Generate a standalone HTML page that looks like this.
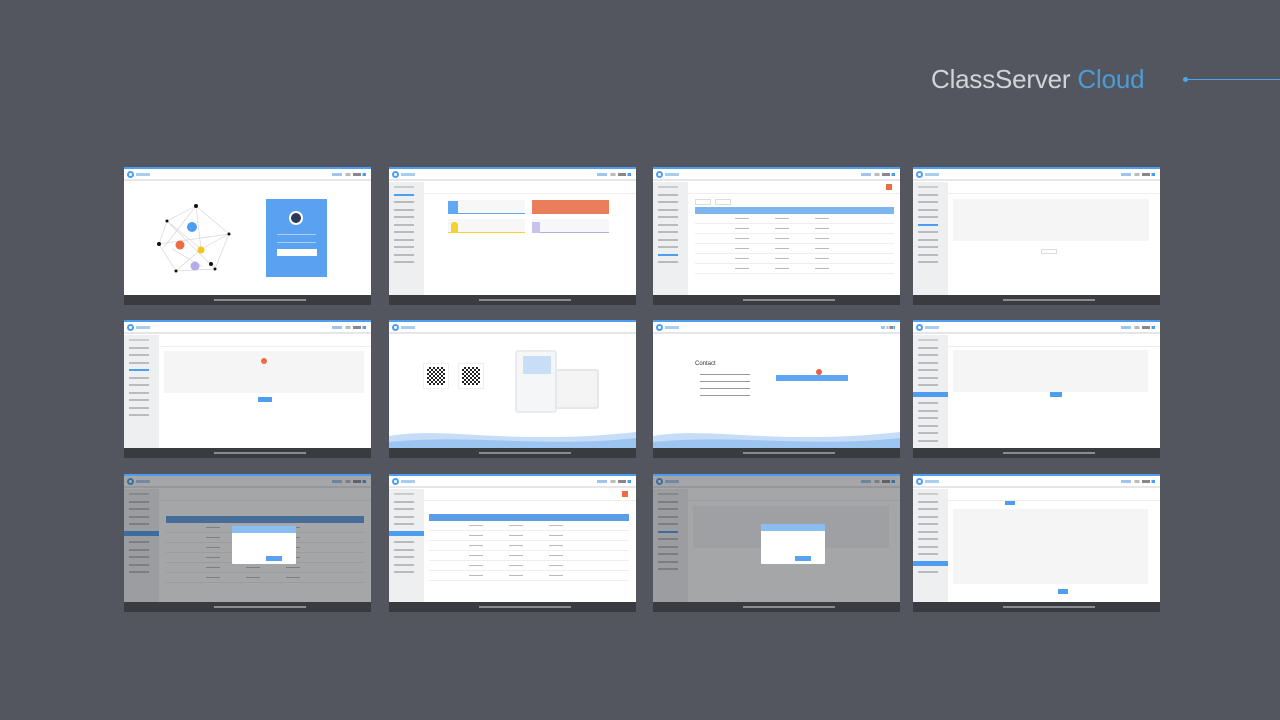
<!DOCTYPE html>
<html><head><meta charset="utf-8">
<style>
*{margin:0;padding:0;box-sizing:border-box}
body{width:1280px;height:720px;background:#53565e;position:relative;overflow:hidden;font-family:"Liberation Sans",sans-serif}
.title{position:absolute;left:931px;top:64px;font-size:26px;color:#d2d4d8;letter-spacing:-0.2px;font-weight:300}
.title span{color:#4c9bd6}
.line{position:absolute;left:1186px;top:79px;width:94px;height:1px;background:#4aa6e8}
.dot{position:absolute;left:1183px;top:77px;width:5px;height:5px;border-radius:50%;background:#4aa6e8}
.t{position:absolute;width:247px;height:138px;background:#fff;overflow:hidden;border-top:2px solid #4d9ef0}
.hd{position:absolute;left:0;top:0;right:0;height:12px;background:#fff;border-bottom:2px solid #e4e6ea}
.lg{position:absolute;left:3px;top:2px;width:7px;height:7px;border-radius:50%;border:2px solid #4d9ef0}
.lt{position:absolute;left:12px;top:4px;width:14px;height:3px;background:#a8cdf3}
.hr{position:absolute;right:5px;top:4px;width:34px;height:3px;background:linear-gradient(90deg,#9cc6f0 0 30%,transparent 30% 40%,#bbb 40% 55%,transparent 55% 62%,#888 62% 85%,transparent 85% 90%,#4d9ef0 90%)}
.ft{position:absolute;left:0;right:0;bottom:0;height:10px;background:#393b40}
.ft:after{content:"";position:absolute;left:90px;top:4px;width:92px;height:2px;background:#8a8c90}
.sb{position:absolute;left:0;top:13px;width:35px;bottom:10px;background:#eeeff1}
.sb i{display:block;height:2px;width:20px;background:#b8bbc0;margin:5.5px 0 0 5px}
.sb i.a{background:#4d9ef0}
.bc{position:absolute;left:35px;top:13px;right:0;height:12px;border-bottom:1px solid #eee}
.r{position:absolute}
.tbl{position:absolute;background:#fff}
.th{height:7px;background:#7db5ee}
.tr{height:10px;border-bottom:1px solid #eee;position:relative}
.tr:after{content:"";position:absolute;left:20%;top:4px;width:60%;height:1px;background:repeating-linear-gradient(90deg,#bbb 0 14px,transparent 14px 40px)}
.dim{position:absolute;left:0;top:0;right:0;bottom:0;background:rgba(40,42,48,.42)}
.dlg{position:absolute;background:#fff;border-radius:1px}
.dlg .h{height:7px;background:#8cbdf0}
.q{position:absolute;background:repeating-conic-gradient(#222 0 25%,#fff 0 50%) 0 0/4px 4px;border:3px solid #fff;outline:1px solid #eee}
</style></head><body>
<div class="title">ClassServer <span>Cloud</span></div>
<div class="dot"></div><div class="line"></div>

<!-- Row 1 -->
<div class="t" style="left:124px;top:167px">
 <div class="hd"><div class="lg"></div><div class="lt"></div><div class="hr"></div></div>
 <svg class="r" style="left:25px;top:25px" width="100" height="85" viewBox="0 0 100 85"><g stroke="#d7d7d7" stroke-width=".7" fill="none"><path d="M47 12L18 27L10 50L27 77L66 75L80 40L47 12M47 12L52 55L27 77M18 27L66 75M10 50L80 40M23 55L54 73M47 12L15 53M52 55L80 40M18 27L52 55"/></g><g fill="#111"><circle cx="47" cy="12" r="2"/><circle cx="18" cy="27" r="1.5"/><circle cx="10" cy="50" r="2"/><circle cx="27" cy="77" r="1.5"/><circle cx="66" cy="75" r="1.5"/><circle cx="80" cy="40" r="1.5"/><circle cx="62" cy="70" r="2"/><circle cx="52" cy="55" r="1"/></g><circle cx="43" cy="33" r="5" fill="#4d9ef0"/><circle cx="31" cy="51" r="4.5" fill="#ee6c43"/><circle cx="52" cy="56" r="3.5" fill="#f5c518"/><circle cx="46" cy="72" r="4.5" fill="#b3aee5"/></svg>
 <div class="r" style="left:142px;top:30px;width:61px;height:78px;background:#5aa2f1"></div>
 <div class="r" style="left:165px;top:42px;width:14px;height:14px;border-radius:50%;background:#2b3a5a;border:2px solid #fff"></div>
 <div class="r" style="left:153px;top:65px;width:39px;height:1px;background:#a9d0f8"></div>
 <div class="r" style="left:153px;top:73px;width:39px;height:1px;background:#a9d0f8"></div>
 <div class="r" style="left:153px;top:80px;width:40px;height:7px;background:#fff"></div>
 <div class="ft"></div>
</div>

<div class="t" style="left:389px;top:167px">
 <div class="hd"><div class="lg"></div><div class="lt"></div><div class="hr"></div></div>
 <div class="sb"><i style="background:#ccc;margin-top:4px"></i><i class="a"></i><i></i><i></i><i></i><i></i><i></i><i></i><i></i><i></i><i></i></div>
 <div class="bc"></div>
 <div class="r" style="left:59px;top:31px;width:77px;height:14px;background:#f7f7f7;border-bottom:1px solid #62a7f2"></div>
 <div class="r" style="left:59px;top:32px;width:10px;height:12px;background:#62a7f2"></div>
 <div class="r" style="left:143px;top:31px;width:77px;height:14px;background:#ea7e5b"></div>
 <div class="r" style="left:59px;top:50px;width:77px;height:14px;background:#f7f7f7;border-bottom:1px solid #f5d232"></div>
 <div class="r" style="left:62px;top:53px;width:7px;height:10px;background:#f5d232;border-radius:3px 3px 0 0"></div>
 <div class="r" style="left:143px;top:50px;width:77px;height:14px;background:#f7f7f7;border-bottom:1px solid #b3aee5"></div>
 <div class="r" style="left:143px;top:53px;width:8px;height:11px;background:#c7c3ee"></div>
 <div class="ft"></div>
</div>

<div class="t" style="left:653px;top:167px">
 <div class="hd"><div class="lg"></div><div class="lt"></div><div class="hr"></div></div>
 <div class="sb"><i style="background:#ccc;margin-top:4px"></i><i></i><i></i><i></i><i></i><i></i><i></i><i></i><i></i><i class="a"></i><i></i></div>
 <div class="bc"></div>
 <div class="r" style="left:233px;top:15px;width:6px;height:6px;background:#ee6c43"></div>
 <div class="r" style="left:42px;top:30px;width:16px;height:6px;border:1px solid #ddd"></div>
 <div class="r" style="left:62px;top:30px;width:16px;height:6px;border:1px solid #ddd"></div>
 <div class="tbl" style="left:42px;top:38px;width:199px"><div class="th"></div><div class="tr"></div><div class="tr"></div><div class="tr"></div><div class="tr"></div><div class="tr"></div><div class="tr"></div></div>
 <div class="ft"></div>
</div>

<div class="t" style="left:913px;top:167px">
 <div class="hd"><div class="lg"></div><div class="lt"></div><div class="hr"></div></div>
 <div class="sb"><i style="background:#ccc;margin-top:4px"></i><i></i><i></i><i></i><i></i><i class="a"></i><i></i><i></i><i></i><i></i><i></i></div>
 <div class="bc"></div>
 <div class="r" style="left:40px;top:30px;width:196px;height:42px;background:#f5f5f6"></div>
 <div class="r" style="left:128px;top:80px;width:16px;height:5px;border:1px solid #ddd"></div>
 <div class="ft"></div>
</div>

<!-- Row 2 -->
<div class="t" style="left:124px;top:320px">
 <div class="hd"><div class="lg"></div><div class="lt"></div><div class="hr"></div></div>
 <div class="sb"><i style="background:#ccc;margin-top:4px"></i><i></i><i></i><i></i><i class="a"></i><i></i><i></i><i></i><i></i><i></i><i></i></div>
 <div class="bc"></div>
 <div class="r" style="left:40px;top:29px;width:200px;height:42px;background:#f5f5f6"></div>
 <div class="r" style="left:137px;top:36px;width:6px;height:6px;border-radius:50%;background:#ee6c43"></div>
 <div class="r" style="left:134px;top:75px;width:14px;height:5px;background:#4d9ef0"></div>
 <div class="ft"></div>
</div>

<div class="t" style="left:389px;top:320px">
 <div class="hd"><div class="lg"></div><div class="lt"></div></div>
 <div class="q" style="left:35px;top:42px;width:24px;height:24px"></div>
 <div class="q" style="left:70px;top:42px;width:24px;height:24px"></div>
 <div class="r" style="left:126px;top:28px;width:42px;height:63px;background:#f4f6f8;border:2px solid #e9ecef;border-radius:3px"></div>
 <div class="r" style="left:134px;top:34px;width:28px;height:18px;background:#c7def6"></div>
 <div class="r" style="left:166px;top:47px;width:44px;height:40px;background:#f4f4f4;border:2px solid #e5e7ea;border-radius:3px"></div>
 <svg class="r" style="left:0;top:104px" width="247" height="24"><path d="M0 10 C60 0 120 20 247 6 V24 H0Z" fill="#c6dcf7"/><path d="M0 16 C80 8 160 22 247 12 V24 H0Z" fill="#9cc5f2"/></svg>
 <div class="ft"></div>
</div>

<div class="t" style="left:653px;top:320px">
 <div class="hd"><div class="lg"></div><div class="lt"></div><div class="hr" style="width:14px"></div></div>
 <div class="r" style="left:42px;top:39px;font-size:6px;color:#333">Contact</div>
 <div class="r" style="left:47px;top:50px;width:50px;height:30px;background:repeating-linear-gradient(#fff 0 2px,#999 2px 3px,#fff 3px 7px)"></div>
 <div class="r" style="left:123px;top:53px;width:72px;height:6px;background:#5fa6f2"></div>
 <div class="r" style="left:163px;top:47px;width:6px;height:6px;border-radius:50%;background:#ee5c43"></div>
 <svg class="r" style="left:0;top:104px" width="247" height="24"><path d="M0 10 C60 0 120 20 247 6 V24 H0Z" fill="#c6dcf7"/><path d="M0 16 C80 8 160 22 247 12 V24 H0Z" fill="#9cc5f2"/></svg>
 <div class="ft"></div>
</div>

<div class="t" style="left:913px;top:320px">
 <div class="hd"><div class="lg"></div><div class="lt"></div><div class="hr"></div></div>
 <div class="sb"><i style="background:#ccc;margin-top:4px"></i><i></i><i></i><i></i><i></i><i></i><i></i><i class="a" style="width:35px;margin-left:0;height:5px"></i><i></i><i></i><i></i><i></i><i></i><i></i></div>
 <div class="bc"></div>
 <div class="r" style="left:40px;top:28px;width:195px;height:42px;background:#f5f5f6"></div>
 <div class="r" style="left:137px;top:70px;width:12px;height:5px;background:#4d9ef0"></div>
 <div class="ft"></div>
</div>

<!-- Row 3 -->
<div class="t" style="left:124px;top:474px">
 <div class="hd"><div class="lg"></div><div class="lt"></div><div class="hr"></div></div>
 <div class="sb"><i style="background:#ccc;margin-top:4px"></i><i></i><i></i><i></i><i></i><i class="a" style="width:35px;margin-left:0;height:5px"></i><i></i><i></i><i></i><i></i><i></i></div>
 <div class="bc"></div>
 <div class="tbl" style="left:42px;top:40px;width:198px"><div class="th" style="background:#5c9ee6"></div><div class="tr"></div><div class="tr"></div><div class="tr"></div><div class="tr"></div><div class="tr"></div><div class="tr"></div></div>
 <div class="dim"></div>
 <div class="dlg" style="left:108px;top:50px;width:64px;height:38px"><div class="h"></div></div>
 <div class="r" style="left:142px;top:80px;width:16px;height:5px;background:#5aa2f1"></div>
 <div class="ft"></div>
</div>

<div class="t" style="left:389px;top:474px">
 <div class="hd"><div class="lg"></div><div class="lt"></div><div class="hr"></div></div>
 <div class="sb"><i style="background:#ccc;margin-top:4px"></i><i></i><i></i><i></i><i></i><i class="a" style="width:35px;margin-left:0;height:5px"></i><i></i><i></i><i></i><i></i><i></i></div>
 <div class="bc"></div>
 <div class="r" style="left:233px;top:15px;width:6px;height:6px;background:#ee6c43"></div>
 <div class="tbl" style="left:40px;top:38px;width:200px"><div class="th" style="background:#5c9ee6"></div><div class="tr"></div><div class="tr"></div><div class="tr"></div><div class="tr"></div><div class="tr"></div><div class="tr"></div></div>
 <div class="ft"></div>
</div>

<div class="t" style="left:653px;top:474px">
 <div class="hd"><div class="lg"></div><div class="lt"></div><div class="hr"></div></div>
 <div class="sb"><i style="background:#ccc;margin-top:4px"></i><i></i><i></i><i></i><i></i><i class="a"></i><i></i><i></i><i></i><i></i><i></i></div>
 <div class="bc"></div>
 <div class="r" style="left:40px;top:30px;width:196px;height:42px;background:#f5f5f6"></div>
 <div class="dim"></div>
 <div class="dlg" style="left:108px;top:48px;width:64px;height:40px"><div class="h"></div></div>
 <div class="r" style="left:142px;top:80px;width:16px;height:5px;background:#5aa2f1"></div>
 <div class="ft"></div>
</div>

<div class="t" style="left:913px;top:474px">
 <div class="hd"><div class="lg"></div><div class="lt"></div><div class="hr"></div></div>
 <div class="sb"><i style="background:#ccc;margin-top:4px"></i><i></i><i></i><i></i><i></i><i></i><i></i><i></i><i></i><i class="a" style="width:35px;margin-left:0;height:5px"></i><i></i></div>
 <div class="bc"></div>
 <div class="r" style="left:40px;top:33px;width:195px;height:75px;background:#f5f5f6"></div>
 <div class="r" style="left:92px;top:25px;width:10px;height:4px;background:#4d9ef0"></div>
 <div class="r" style="left:145px;top:113px;width:10px;height:5px;background:#4d9ef0"></div>
 <div class="ft"></div>
</div>
</body></html>
